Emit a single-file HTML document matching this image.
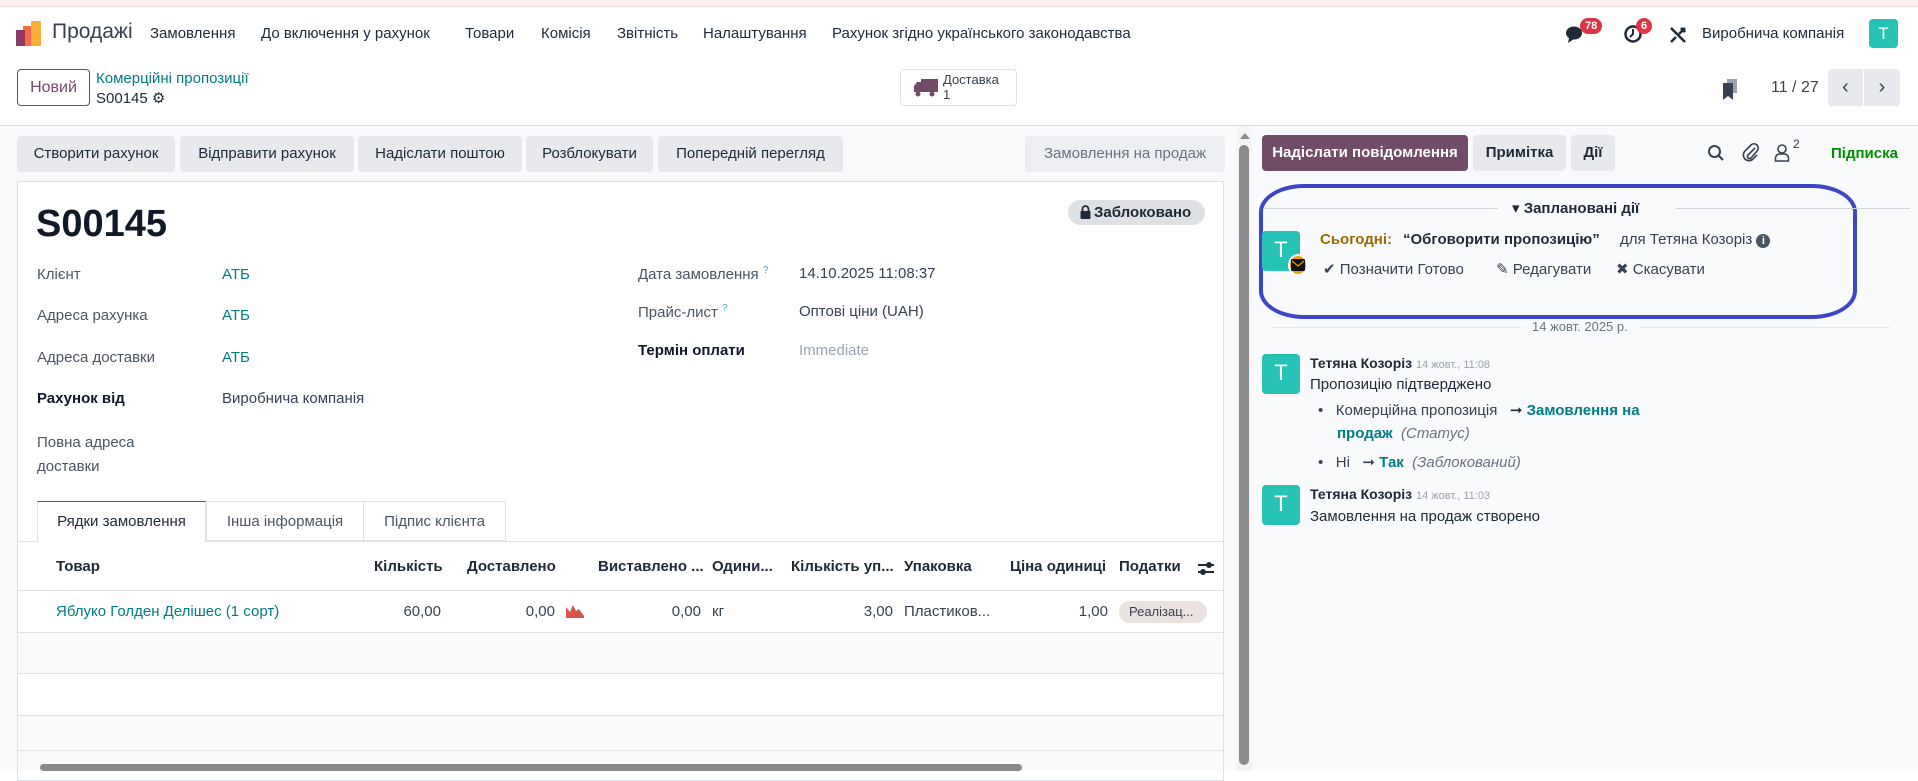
<!DOCTYPE html>
<html><head><meta charset="utf-8">
<style>
*{box-sizing:border-box;margin:0;padding:0}
body{width:1918px;height:771px;overflow:hidden;font-family:"Liberation Sans","DejaVu Sans",sans-serif;font-size:15px;color:#374151;background:#fff;position:relative}
.a{position:absolute;white-space:nowrap}
.btn{position:absolute;background:#e7e9ed;border-radius:4px;height:36px;line-height:36px;text-align:center;color:#1f2937;font-size:15px}
.teal{color:#017e84}
.lbl{color:#4b5563}
.av{position:absolute;background:#25c2b5;color:#fff;border-radius:4px;width:38px;height:38px;text-align:center;line-height:38px;font-size:22px}
.th{position:absolute;top:558px;font-weight:bold;color:#1f2937;white-space:nowrap}
.td{position:absolute;top:603px;white-space:nowrap;color:#374151}
.hl{position:absolute;left:17px;width:1207px;height:1px;background:#dee2e6}
</style></head><body>
<div class="a" style="left:0;top:0;width:1918px;height:7px;background:#fdf1f1;border-bottom:1px solid #f3dede"></div>
<svg class="a" style="left:16px;top:21px" width="26" height="25" viewBox="0 0 26 25"><rect x="0" y="9" width="9" height="16" fill="#8b3a68"/><rect x="7" y="5" width="9" height="20" fill="#f05a3a" opacity=".9"/><rect x="15" y="0" width="10" height="25" fill="#f9b03a"/><rect x="7" y="9" width="2" height="16" fill="#a33"/></svg>
<div class="a" style="left:52px;top:20px;font-size:21px;color:#374151">Продажі</div>
<div class="a" style="left:150px;top:25px;color:#1f2937">Замовлення</div>
<div class="a" style="left:261px;top:25px;color:#1f2937">До включення у рахунок</div>
<div class="a" style="left:465px;top:25px;color:#1f2937">Товари</div>
<div class="a" style="left:541px;top:25px;color:#1f2937">Комісія</div>
<div class="a" style="left:617px;top:25px;color:#1f2937">Звітність</div>
<div class="a" style="left:703px;top:25px;color:#1f2937">Налаштування</div>
<div class="a" style="left:832px;top:25px;color:#1f2937">Рахунок згідно українського законодавства</div>
<svg class="a" style="left:1565px;top:25px" width="22" height="20" viewBox="0 0 22 20"><ellipse cx="9" cy="8" rx="8" ry="6.5" fill="#1f2937"/><path d="M4 13 L3 18 L9 14Z" fill="#1f2937"/></svg>
<div class="a" style="left:1580px;top:18px;background:#dc3545;color:#fff;font-size:11px;font-weight:bold;border-radius:9px;padding:1px 5px;line-height:14px">78</div>
<svg class="a" style="left:1623px;top:24px" width="20" height="20" viewBox="0 0 20 20"><circle cx="10" cy="10" r="7.5" fill="none" stroke="#1f2937" stroke-width="2.5"/><path d="M10 5v5l-3 3" stroke="#1f2937" stroke-width="2" fill="none"/></svg>
<div class="a" style="left:1636px;top:18px;background:#dc3545;color:#fff;font-size:11px;font-weight:bold;border-radius:9px;padding:1px 5px;line-height:14px">6</div>
<svg class="a" style="left:1668px;top:25px" width="20" height="20" viewBox="0 0 20 20"><path d="M3 3 L17 17 M17 3 L11 9 M3 17 L8 12" stroke="#1f2937" stroke-width="2.5" fill="none"/><path d="M13 3 L17 7" stroke="#1f2937" stroke-width="3"/></svg>
<div class="a" style="left:1702px;top:25px;color:#1f2937">Виробнича компанія</div>
<div class="av" style="left:1869px;top:19px;width:29px;height:29px;line-height:29px;font-size:17px">T</div>
<div class="a" style="left:17px;top:69px;width:73px;height:37px;border:1px solid #714b67;border-radius:4px;text-align:center;line-height:35px;color:#714b67;font-size:16px">Новий</div>
<div class="a teal" style="left:96px;top:70px;font-size:15px">Комерційні пропозиції</div>
<div class="a" style="left:96px;top:89px;font-size:15px;color:#1f2937">S00145 <span style="font-size:15px">⚙</span></div>
<div class="a" style="left:900px;top:69px;width:117px;height:37px;border:1px solid #dee2e6;border-radius:4px"></div>
<svg class="a" style="left:913px;top:78px" width="26" height="20" viewBox="0 0 26 20"><rect x="8" y="1" width="17" height="13" fill="#714b67"/><path d="M1 14 V8 L4 4 H8 V14Z" fill="#714b67"/><circle cx="5" cy="16" r="2.5" fill="#714b67"/><circle cx="19" cy="16" r="2.5" fill="#714b67"/></svg>
<div class="a" style="left:943px;top:72px;font-size:13px;color:#374151;line-height:15px">Доставка<br>1</div>
<svg class="a" style="left:1722px;top:79px" width="16" height="22" viewBox="0 0 16 22"><rect x="5" y="0" width="10" height="14" fill="#9ca3af"/><path d="M1 4 H11 V21 L6 17 L1 21Z" fill="#374151"/></svg>
<div class="a" style="left:1771px;top:79px;color:#374151;font-size:16px">11 / 27</div>
<div class="a" style="left:1828px;top:69px;width:35px;height:37px;background:#e7e9ed;border-radius:4px 0 0 4px;text-align:center;line-height:36px;font-size:20px;color:#374151">‹</div>
<div class="a" style="left:1864px;top:69px;width:36px;height:37px;background:#e7e9ed;border-radius:0 4px 4px 0;text-align:center;line-height:36px;font-size:20px;color:#374151">›</div>
<div class="a" style="left:0;top:125px;width:1918px;height:1px;background:#d8dadd"></div>
<div class="a" style="left:0;top:126px;width:1237px;height:645px;background:#f9fafb"></div>
<div class="btn" style="left:17px;top:136px;width:158px">Створити рахунок</div>
<div class="btn" style="left:180px;top:136px;width:174px">Відправити рахунок</div>
<div class="btn" style="left:358px;top:136px;width:164px">Надіслати поштою</div>
<div class="btn" style="left:526px;top:136px;width:127px">Розблокувати</div>
<div class="btn" style="left:658px;top:136px;width:185px">Попередній перегляд</div>
<div class="btn" style="left:1025px;top:136px;width:200px;background:#eceef1;color:#6b7280">Замовлення на продаж</div>
<div class="a" style="left:17px;top:181px;width:1207px;height:600px;background:#fff;border:1px solid #dee2e6"></div>
<div class="a" style="left:36px;top:203px;font-size:38px;font-weight:bold;color:#111827">S00145</div>
<div class="a" style="left:1068px;top:200px;width:137px;height:25px;background:#dee0e3;border-radius:13px;font-weight:bold;color:#1f2937;line-height:25px;padding-left:26px;font-size:15px">Заблоковано</div>
<svg class="a" style="left:1080px;top:205px" width="11" height="14" viewBox="0 0 11 14"><path d="M2.5 6 V4 a3 3 0 0 1 6 0 V6" fill="none" stroke="#1f2937" stroke-width="1.8"/><rect x="0.5" y="6" width="10" height="8" rx="1" fill="#1f2937"/></svg>
<div class="a lbl" style="left:37px;top:266px">Клієнт</div><div class="a teal" style="left:222px;top:266px">АТБ</div>
<div class="a lbl" style="left:37px;top:307px">Адреса рахунка</div><div class="a teal" style="left:222px;top:307px">АТБ</div>
<div class="a lbl" style="left:37px;top:349px">Адреса доставки</div><div class="a teal" style="left:222px;top:349px">АТБ</div>
<div class="a" style="left:37px;top:390px;font-weight:bold;color:#111827">Рахунок від</div><div class="a" style="left:222px;top:390px">Виробнича компанія</div>
<div class="a lbl" style="left:37px;top:431px;line-height:24px">Повна адреса<br>доставки</div>
<div class="a lbl" style="left:638px;top:265px">Дата замовлення <sup style="color:#5fa8c8;font-size:10px">?</sup></div><div class="a" style="left:799px;top:265px">14.10.2025 11:08:37</div>
<div class="a lbl" style="left:638px;top:303px">Прайс-лист <sup style="color:#5fa8c8;font-size:10px">?</sup></div><div class="a" style="left:799px;top:303px">Оптові ціни (UAH)</div>
<div class="a" style="left:638px;top:342px;font-weight:bold;color:#111827">Термін оплати</div><div class="a" style="left:799px;top:342px;color:#9ca3af">Immediate</div>
<div class="hl" style="top:541px"></div>
<div class="a" style="left:37px;top:501px;width:169px;height:41px;background:#fff;border:1px solid #dee2e6;border-top:1px solid #714b67;border-bottom:none;text-align:center;line-height:40px;color:#1f2937">Рядки замовлення</div>
<div class="a" style="left:206px;top:501px;width:158px;height:40px;border:1px solid #dee2e6;text-align:center;line-height:40px;color:#4b5563">Інша інформація</div>
<div class="a" style="left:364px;top:501px;width:142px;height:40px;border:1px solid #dee2e6;border-left:none;text-align:center;line-height:40px;color:#4b5563">Підпис клієнта</div>
<div class="th" style="left:56px">Товар</div>
<div class="th" style="left:374px">Кількість</div>
<div class="th" style="left:467px">Доставлено</div>
<div class="th" style="left:598px">Виставлено ...</div>
<div class="th" style="left:712px">Одини...</div>
<div class="th" style="left:791px">Кількість уп...</div>
<div class="th" style="left:904px">Упаковка</div>
<div class="th" style="left:1010px">Ціна одиниці</div>
<div class="th" style="left:1119px">Податки</div>
<svg class="a" style="left:1196px;top:560px" width="20" height="18" viewBox="0 0 20 18"><path d="M2 5H18M2 12H18" stroke="#1f2937" stroke-width="2"/><circle cx="13" cy="5" r="3" fill="#1f2937"/><circle cx="7" cy="12" r="3" fill="#1f2937"/></svg>
<div class="hl" style="top:590px"></div>
<div class="td" style="left:56px;color:#017e84">Яблуко Голден Делішес (1 сорт)</div>
<div class="td" style="left:380px;width:61px;text-align:right">60,00</div>
<div class="td" style="left:500px;width:55px;text-align:right">0,00</div>
<svg class="a" style="left:566px;top:603px" width="18" height="15" viewBox="0 0 18 15"><path d="M0 15 V4 L4 9 L7 2 L10 8 L13 6 L18 13 V15Z" fill="#d9534f"/><path d="M0 15H18" stroke="#d9534f" stroke-width="2"/></svg>
<div class="td" style="left:640px;width:61px;text-align:right">0,00</div>
<div class="td" style="left:712px">кг</div>
<div class="td" style="left:830px;width:63px;text-align:right">3,00</div>
<div class="td" style="left:904px">Пластиков...</div>
<div class="td" style="left:1050px;width:58px;text-align:right">1,00</div>
<div class="a" style="left:1119px;top:601px;width:88px;height:22px;background:#e9e2e0;border-radius:11px;font-size:13px;line-height:22px;padding-left:10px;color:#374151">Реалізац...</div>
<div class="hl" style="top:632px"></div>
<div class="a" style="left:18px;top:633px;width:1205px;height:137px;background:#fafafa"></div>
<div class="a" style="left:18px;top:674px;width:1205px;height:41px;background:#fff"></div>
<div class="hl" style="top:673px"></div>
<div class="hl" style="top:715px"></div>
<div class="hl" style="top:750px"></div>
<div class="a" style="left:40px;top:764px;width:982px;height:7px;background:#8a8a8a;border-radius:4px"></div>
<div class="a" style="left:1237px;top:126px;width:15px;height:645px;background:#f3f4f6"></div>
<div class="a" style="left:1239px;top:145px;width:10px;height:620px;background:#8a8a8a;border-radius:5px"></div>
<div class="a" style="left:1240px;top:133px;width:0;height:0;border-left:5px solid transparent;border-right:5px solid transparent;border-bottom:6px solid #8a8a8a"></div>
<div class="a" style="left:1252px;top:126px;width:666px;height:645px;background:#f9fafb"></div>
<div class="btn" style="left:1262px;top:135px;width:206px;background:#714b67;color:#fff;font-weight:bold">Надіслати повідомлення</div>
<div class="btn" style="left:1473px;top:135px;width:93px;font-weight:bold">Примітка</div>
<div class="btn" style="left:1571px;top:135px;width:44px;font-weight:bold">Дії</div>
<svg class="a" style="left:1707px;top:144px" width="18" height="18" viewBox="0 0 18 18"><circle cx="7.5" cy="7.5" r="5.5" fill="none" stroke="#374151" stroke-width="2"/><path d="M11.5 11.5L16 16" stroke="#374151" stroke-width="2.2"/></svg>
<svg class="a" style="left:1742px;top:142px" width="18" height="20" viewBox="0 0 18 20"><path d="M13 6 L6 13 a2 2 0 0 0 3 3 L15 9 a4 4 0 0 0 -6 -6 L3 9 a5.5 5.5 0 0 0 8 8 L15 13" fill="none" stroke="#374151" stroke-width="1.6"/></svg>
<svg class="a" style="left:1774px;top:143px" width="18" height="19" viewBox="0 0 18 19"><circle cx="8" cy="6" r="4" fill="none" stroke="#374151" stroke-width="1.6"/><path d="M1.5 18 V15 a4 4 0 0 1 4 -4 H10.5 a4 4 0 0 1 4 4 V18Z" fill="none" stroke="#374151" stroke-width="1.6"/></svg>
<div class="a" style="left:1793px;top:137px;font-size:12px;color:#374151">2</div>
<div class="a" style="left:1831px;top:145px;font-weight:bold;color:#008f00">Підписка</div>
<div class="a" style="left:1259px;top:184px;width:598px;height:135px;border:4px solid #3d45c8;border-radius:45px/28px"></div>
<div class="a" style="left:1263px;top:208px;width:235px;height:1px;background:#d1d5db"></div>
<div class="a" style="left:1676px;top:208px;width:234px;height:1px;background:#d1d5db"></div>
<div class="a" style="left:1512px;top:199px;font-weight:bold;color:#1f2937;font-size:15px">▾ Заплановані дії</div>
<div class="av" style="left:1262px;top:231px;width:38px;height:40px">T</div>
<div class="a" style="left:1288px;top:254px;width:20px;height:22px;background:#e8a100;border-radius:50%;border:2px solid #fff"></div>
<svg class="a" style="left:1291px;top:259px" width="14" height="12" viewBox="0 0 14 12"><rect width="14" height="12" rx="1" fill="#111"/><path d="M1 2 L7 7 L13 2" stroke="#e8a100" stroke-width="1.2" fill="none"/></svg>
<div class="a" style="left:1320px;top:231px;font-weight:bold;color:#9a6a00">Сьогодні:</div>
<div class="a" style="left:1403px;top:231px;font-weight:bold;color:#1f2937">“Обговорити пропозицію”</div>
<div class="a" style="left:1620px;top:231px;color:#374151">для Тетяна Козоріз <span style="display:inline-block;width:14px;height:14px;border-radius:50%;background:#4b5563;color:#fff;font-size:11px;line-height:14px;text-align:center;font-weight:bold">i</span></div>
<div class="a" style="left:1323px;top:260px;color:#374151">✔ Позначити Готово</div>
<div class="a" style="left:1496px;top:260px;color:#374151">✎ Редагувати</div>
<div class="a" style="left:1616px;top:260px;color:#374151"><b>✖</b> Скасувати</div>
<div class="a" style="left:1271px;top:327px;width:250px;height:1px;background:#e5e7eb"></div>
<div class="a" style="left:1640px;top:327px;width:250px;height:1px;background:#e5e7eb"></div>
<div class="a" style="left:1532px;top:319px;color:#6b7280;font-size:13px">14 жовт. 2025 р.</div>
<div class="av" style="left:1262px;top:354px;width:38px;height:40px">T</div>
<div class="a" style="left:1310px;top:355px;font-weight:bold;color:#1f2937;font-size:14px">Тетяна Козоріз <span style="font-weight:normal;color:#9ca3af;font-size:11px">14 жовт., 11:08</span></div>
<div class="a" style="left:1310px;top:376px;color:#1f2937">Пропозицію підтверджено</div>
<div class="a" style="left:1318px;top:401px;color:#374151">•&nbsp;&nbsp;&nbsp;Комерційна пропозиція&nbsp;&nbsp;&nbsp;<span style="color:#1f2937">➞</span> <b style="color:#017e84">Замовлення на</b></div>
<div class="a" style="left:1337px;top:425px"><b style="color:#017e84">продаж</b>&nbsp;&nbsp;<i style="color:#6b7280">(Статус)</i></div>
<div class="a" style="left:1318px;top:453px;color:#374151">•&nbsp;&nbsp;&nbsp;Ні&nbsp;&nbsp;&nbsp;➞ <b style="color:#017e84">Так</b>&nbsp;&nbsp;<i style="color:#6b7280">(Заблокований)</i></div>
<div class="av" style="left:1262px;top:485px;width:38px;height:40px">T</div>
<div class="a" style="left:1310px;top:486px;font-weight:bold;color:#1f2937;font-size:14px">Тетяна Козоріз <span style="font-weight:normal;color:#9ca3af;font-size:11px">14 жовт., 11:03</span></div>
<div class="a" style="left:1310px;top:508px;color:#1f2937">Замовлення на продаж створено</div>
</body></html>
